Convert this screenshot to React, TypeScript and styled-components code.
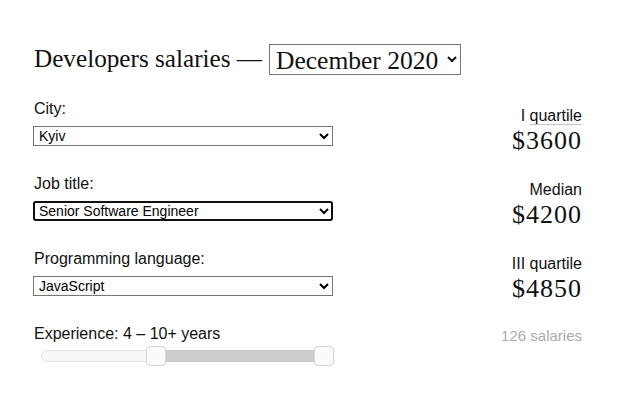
import styled, { createGlobalStyle } from "styled-components";

const GlobalStyle = createGlobalStyle`
  body {
    margin: 0;
    background: #ffffff;
    color: #111111;
    font-family: "Liberation Sans", Arial, sans-serif;
  }
`;

const SERIF = `"Liberation Serif", Georgia, serif`;

const Page = styled.div`
  width: 548px;
  padding: 42px 0 0 34px;
`;

const Title = styled.h1`
  margin: 0 0 24px;
  display: flex;
  align-items: center;
  gap: 7px;
  font-family: ${SERIF};
  font-weight: normal;
  font-size: 25.2px;
  height: 34px;
`;

const MonthSelect = styled.select`
  font-family: ${SERIF};
  font-size: 25.5px;
  height: 31px;
  width: 192px;
  padding: 0 2px;
  color: #111;
  background: #fff;
  border: 1px solid #767676;
  border-radius: 0;
`;

const Columns = styled.div`
  display: flex;
  justify-content: space-between;
`;

const Filters = styled.div`
  display: flex;
  flex-direction: column;
  gap: 29px;
  width: 300px;
`;

const Field = styled.div`
  display: flex;
  flex-direction: column;
  gap: 8px;
`;

const Label = styled.label`
  font-size: 16px;
  line-height: 18px;
  color: #111;
`;

const Select = styled.select<{ $focused?: boolean }>`
  width: 300px;
  height: 20px;
  font-family: "Liberation Sans", Arial, sans-serif;
  font-size: 14px;
  color: #000;
  background: #fff;
  border: 1px solid #767676;
  border-radius: 0;
  padding: 0 0 0 1px;
  margin-left: -1px;
  outline: ${(p) => (p.$focused ? "2px solid #101010" : "none")};
  outline-offset: -2px;
  ${(p) => (p.$focused ? "border-radius: 3px;" : "")}
`;

const Slider = styled.div`
  position: relative;
  margin: -5px 0 0 7px;
  width: 293px;
  height: 20px;
`;

const Track = styled.div`
  position: absolute;
  left: 0;
  right: 0;
  top: 4px;
  height: 12px;
  box-sizing: border-box;
  background: #f7f7f7;
  border: 1px solid #e3e3e3;
  border-radius: 6px;
`;

const Range = styled.div`
  position: absolute;
  top: 4px;
  height: 12px;
  background: #cccccc;
`;

const Thumb = styled.div`
  position: absolute;
  top: 0;
  width: 20px;
  height: 20px;
  box-sizing: border-box;
  background: #fafafa;
  border: 1px solid #d6d6d6;
  border-radius: 4px;
`;

const Stats = styled.div`
  display: flex;
  flex-direction: column;
  align-items: flex-end;
  padding-top: 7px;
`;

const Stat = styled.div`
  display: flex;
  flex-direction: column;
  align-items: flex-end;
  margin-bottom: 24px;
`;

const StatLabel = styled.div`
  font-size: 16px;
  line-height: 18px;
  color: #111;
`;

const Underlined = styled.span`
  text-decoration: underline;
  text-decoration-color: #c4c4c4;
  text-underline-offset: 3px;
`;

const StatValue = styled.div`
  font-family: ${SERIF};
  font-size: 26px;
  line-height: 32px;
  letter-spacing: 1px;
  color: #111;
`;

const Count = styled.div`
  font-size: 15px;
  color: #aaaaaa;
  margin-top: -2px;
`;

const stats = [
  { label: "I quartile", value: "$3600", underline: true },
  { label: "Median", value: "$4200" },
  { label: "III quartile", value: "$4850" },
];

export default function App() {
  // position of the range handles as fraction of the track
  const from = 0.385;
  const to = 1;
  const usable = 293 - 20;
  const fromX = from * usable;
  const toX = to * usable;

  return (
    <>
      <GlobalStyle />
      <Page>
        <Title>
          Developers salaries —
          <MonthSelect defaultValue="2020-12">
            <option value="2020-12">December 2020</option>
          </MonthSelect>
        </Title>
        <Columns>
          <Filters>
            <Field>
              <Label>City:</Label>
              <Select defaultValue="kyiv">
                <option value="kyiv">Kyiv</option>
              </Select>
            </Field>
            <Field>
              <Label>Job title:</Label>
              <Select $focused defaultValue="sse">
                <option value="sse">Senior Software Engineer</option>
              </Select>
            </Field>
            <Field>
              <Label>Programming language:</Label>
              <Select defaultValue="js">
                <option value="js">JavaScript</option>
              </Select>
            </Field>
            <Field>
              <Label>Experience: 4 – 10+ years</Label>
              <Slider>
                <Track />
                <Range style={{ left: fromX + 10, width: toX - fromX }} />
                <Thumb style={{ left: fromX }} />
                <Thumb style={{ left: toX }} />
              </Slider>
            </Field>
          </Filters>
          <Stats>
            {stats.map((s) => (
              <Stat key={s.label}>
                <StatLabel>
                  {s.underline ? (
                    <>
                      I <Underlined>quartile</Underlined>
                    </>
                  ) : (
                    s.label
                  )}
                </StatLabel>
                <StatValue>{s.value}</StatValue>
              </Stat>
            ))}
            <Count>126 salaries</Count>
          </Stats>
        </Columns>
      </Page>
    </>
  );
}
